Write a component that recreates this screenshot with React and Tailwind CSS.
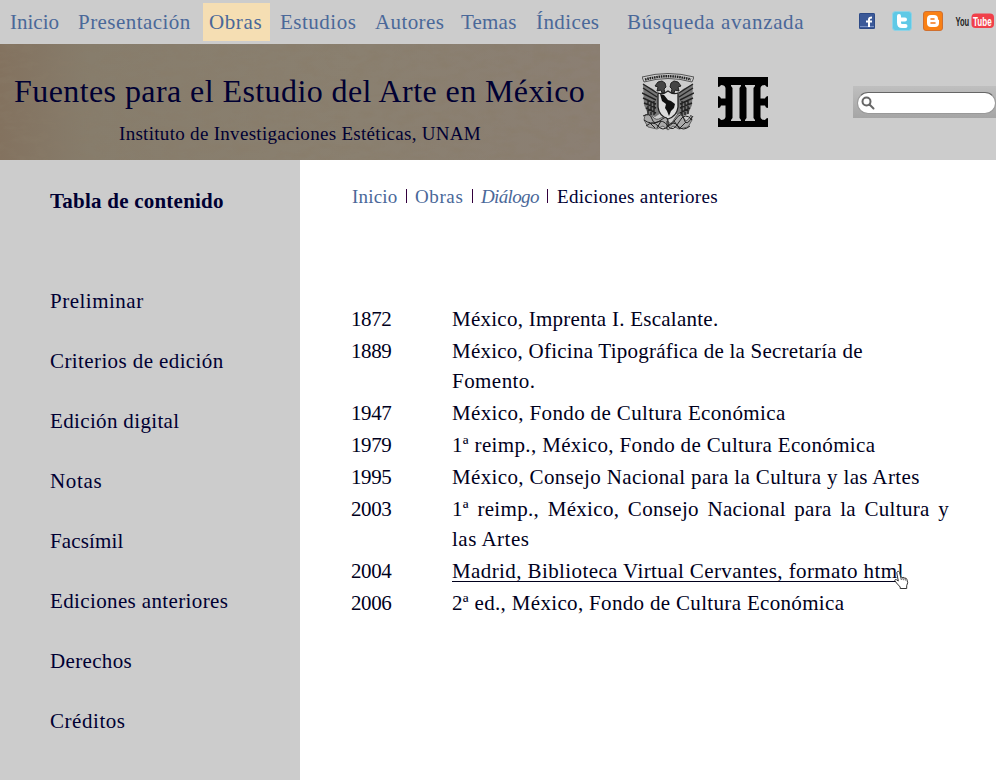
import React from 'react';

const nav = [
  ['Inicio', 'ml-[10px] w-[68px]', ''],
  ['Presentación', 'w-[125px]', 'tracking-[0.45px]'],
  ['Obras', 'w-[67px] bg-[#f5deb3] pl-[6px]', 'tracking-[0.6px]'],
  ['Estudios', 'ml-[10px] w-[95px]', 'tracking-[0.5px]'],
  ['Autores', 'w-[86px]', 'tracking-[0.4px]'],
  ['Temas', 'w-[75px]', 'tracking-[0.2px]'],
  ['Índices', 'w-[91px]', 'tracking-[0.4px]'],
  ['Búsqueda avanzada', 'w-[190px]', 'tracking-[0.65px]'],
];

const sections = [
  ['Preliminar', 'tracking-[0.5px]'],
  ['Criterios de edición', 'tracking-[0.4px]'],
  ['Edición digital', 'tracking-[0.35px]'],
  ['Notas', 'tracking-[0.7px]'],
  ['Facsímil', 'tracking-[0.15px]'],
  ['Ediciones anteriores', 'tracking-[0.37px]'],
  ['Derechos', 'tracking-[0.35px]'],
  ['Créditos', 'tracking-[0.55px]'],
];

const editions = [
  ['1872', [['México, Imprenta I. Escalante.', 'tracking-[0.25px]']]],
  ['1889', [['México, Oficina Tipográfica de la Secretaría de', 'tracking-[0.24px]'], ['Fomento.', 'tracking-[0.45px]']]],
  ['1947', [['México, Fondo de Cultura Económica', 'tracking-[0.36px]']]],
  ['1979', [['1ª reimp., México, Fondo de Cultura Económica', 'tracking-[0.35px]']]],
  ['1995', [['México, Consejo Nacional para la Cultura y las Artes', 'tracking-[0.37px]']]],
  ['2003', [['1ª reimp., México, Consejo Nacional para la Cultura y', 'w-[497px] tracking-[0.33px] [text-align-last:justify]'], ['las Artes', 'tracking-[0.5px]']]],
  ['2004', [['Madrid, Biblioteca Virtual Cervantes, formato html', 'tracking-[0.4px] underline decoration-1 underline-offset-[3px]']]],
  ['2006', [['2ª ed., México, Fondo de Cultura Económica', 'tracking-[0.33px]']]],
];

function Paper() {
  return (
    <svg className="absolute inset-0 h-full w-full" aria-hidden="true">
      <defs>
        <linearGradient id="tone">
          <stop offset="0" stopColor="#83725f" />
          <stop offset=".15" stopColor="#877d6c" />
          <stop offset=".6" stopColor="#8a8070" />
          <stop offset="1" stopColor="#8b7f73" />
        </linearGradient>
        <filter id="grain" x="0" y="0" width="100%" height="100%">
          <feTurbulence type="fractalNoise" baseFrequency=".06 .12" numOctaves="4" seed="8" />
          <feColorMatrix values="0 0 0 0 .25  0 0 0 0 .2  0 0 0 0 .14  2.4 0 0 0 -.98" />
        </filter>
      </defs>
      <rect width="100%" height="100%" fill="url(#tone)" />
      <rect width="100%" height="100%" filter="url(#grain)" opacity=".45" />
    </svg>
  );
}

function Crest() {
  return (
    <svg width="52" height="58" viewBox="0 0 52 58" fill="none" stroke="#222" strokeWidth="1">
      <path d="M0 4Q26-3 52 4L50 9Q26 2 2 9Z" strokeWidth=".7" />
      <path d="M3 6.500Q26 0 49 6.500" strokeWidth="2.400" strokeDasharray="1.600 .7" />
      <path d="M20 20l-1-3-4 1 1-4-3-1 3-4 4-1 3 2 1 4-2 2 1 4zM32 20l1-3 4 1-1-4 3-1-3-4-4-1-3 2-1 4 2 2-1 4z" fill="#444" />
      <path d="M1 11l10 5 5 5v13l3 6-6 4-7-3-4-9zM51 11l-10 5-5 5v13l-3 6 6 4 7-3 4-9z" fill="#777" stroke="none" />
      <path d="M1 11l14 9M1 15l14 9M0 20l14 7M1 25l13 6M2 30l12 5M4 35l10 5M6 28v13M9 29v13M12 28v14M51 11l-14 9M51 15l-14 9M52 20l-14 7M51 25l-13 6M50 30l-12 5M48 35l-10 5M46 28v13M43 29v13M40 28v14" strokeWidth="1.400" />
      <path d="M16 20q5 2 10-2 5 4 10 2v14q-1 9-10 12-9-3-10-12z" fill="#ddd" strokeWidth="1.300" />
      <path d="M18 21l4 1 4 5 3 1 4 3-1 4-3 3-2 5-2-5-2-3 1-4-4-3z" fill="#111" stroke="none" />
      <path d="M3 42q5-2 8 2t8 1 7 3 7-3 8-1 8-2l1 5-4 7-9 2-6-3-5 4-5-4-6 3-9-2-4-7z" fill="#aaa" strokeWidth=".6" />
      <path d="M1 43q7-4 9 3t9 1 7 2 7-2 9-1 9-3M2 47q7 5 13 2t11 4 11-4 13-2M4 53q7-6 12 0t10 0 10 0 12 0M7 49l6 6m6-7l-4 7m10-7v8m7-8l5 7m7-6l-7 7" />
    </svg>
  );
}

function InstituteLogo() {
  return (
    <svg width="50" height="50" viewBox="0 0 50 50">
      <rect width="50" height="50" fill="#000" />
      <path d="M13 8h10v1l-1.500 2v30l1.500 2v1H13v-1l1.500-2V11L13 9zM27 8h10v1l-1.500 2v30l1.500 2v1H27v-1l1.500-2V11L27 9z" fill="#ccc" />
      <path d="M0 10q2 0 3-2 4 0 4.500 3v10.500H3Q2.500 19 0 19zM0 31q2.500 0 3-2.500h4.500V40q-.5 3-4.500 3-1-2-3-2zM50 10q-2 0-3-2-4 0-4.500 3v10.500H47q.5-2.500 3-2.500zM50 31q-2.500 0-3-2.500h-4.500V40q.5 3 4.500 3 1-2 3-2z" fill="#ccc" />
    </svg>
  );
}

function Social() {
  return (
    <div className="flex h-[20px] items-center">
      <svg width="16" height="16" viewBox="0 0 16 16"><rect width="16" height="16" rx="1.500" fill="#3b5998" /><rect x=".5" y=".5" width="15" height="15" rx="1" fill="none" stroke="#2d4a86" /><path d="M1 13.500h14" stroke="#7890c4" /><path d="M10 14V6.500q0-2 3-2M7 8.500h6" stroke="#fff" strokeWidth="2" fill="none" /></svg>
      <svg className="ml-[17px]" width="20" height="20" viewBox="0 0 20 20"><rect x=".5" y=".5" width="19" height="19" rx="3" fill="#5fc9e6" stroke="#8fd3e6" /><path d="M7 5v6.500q0 3.500 3 3.500h3.500M7 8.500h6" stroke="#fff" strokeWidth="4" strokeLinecap="round" strokeLinejoin="round" fill="none" /></svg>
      <svg className="ml-[11px]" width="20" height="20" viewBox="0 0 20 20"><rect x=".5" y=".5" width="19" height="19" rx="2.500" fill="#f98014" stroke="#cf7030" /><path d="M8 4h3q4 0 4 4 0 1 1 1v3q0 4-4 4H8q-4 0-4-4V8q0-4 4-4z" fill="#fff" /><path d="M8 8h3M8 12h4" stroke="#f47614" strokeWidth="1.600" strokeLinecap="round" /></svg>
      <svg className="ml-[12px] shrink-0" width="40" height="18" viewBox="0 0 40 18"><rect x="16.500" y="1.500" width="22.500" height="14.500" rx="4" fill="#f0404a" /><text transform="translate(.5 13.500) scale(.58 1)" fill="#222" fontFamily="Liberation Sans" fontWeight="700" fontSize="13">You</text><text transform="translate(18 13.500) scale(.62 1)" fill="#fff" fontFamily="Liberation Sans" fontWeight="700" fontSize="13">Tube</text></svg>
    </div>
  );
}

function Divider({ place }) {
  return <span className={`${place} mt-[5px] h-[14px] w-px bg-[#33003d]`} />;
}

function HandCursor() {
  return (
    <svg className="absolute top-[14px] left-[442px]" width="15" height="20" viewBox="0 0 15 20">
      <path d="M3.500 1.500q1.500-1 2 1l1.300 5q1-1 2 .2 1.200-.8 2 .5 1.500-.5 2 1l.9 3.500-1 3v2.800H6.200V17L2.500 13 .8 10.500q.2-1.500 1.700-.8L4.300 11 2.800 3q-.1-1 .7-1.500z" fill="#fff" stroke="#333" strokeLinejoin="round" />
      <path d="M6.800 7.500l.6 2.500M8.900 8l.5 2.200M11 8.500l.4 2" stroke="#333" strokeWidth=".8" />
    </svg>
  );
}

export default function App() {
  return (
    <div className="flex h-[780px] w-[996px] flex-col overflow-hidden bg-white font-['Liberation_Serif',serif] text-[21px] whitespace-nowrap text-[#000033]">
      <header className="bg-[#cccccc]">
        <div className="flex h-[44px] pt-[3px]">
          <nav className="flex h-[38px] shrink-0 leading-[38px] text-[#4a6899]">
            {nav.map(([label, box, tracking]) => (
              <a key={label} className={`${box} ${tracking}`}>{label}</a>
            ))}
          </nav>
          <div className="ml-[42px] pt-[8px]"><Social /></div>
        </div>
        <div className="flex h-[116px]">
          <div className="relative w-[600px]">
            <Paper />
            <div className="relative">
              <h1 className="pt-[28px] pl-[14px] text-[32px] leading-[38px] tracking-[0.42px]">Fuentes para el Estudio del Arte en México</h1>
              <p className="pt-[12px] pl-[119px] text-[19px] leading-[24px] tracking-[0.3px]">Instituto de Investigaciones Estéticas, UNAM</p>
            </div>
          </div>
          <div className="mt-[29px] ml-[42px]"><Crest /></div>
          <div className="mt-[33px] ml-[24px]"><InstituteLogo /></div>
          <div className="mt-[42px] ml-[85px] h-[32px] w-[143px] bg-linear-to-b from-[#bfbfbf] to-[#a5a5a5] pt-[6px] pl-[4px]">
            <div className="h-[22px] w-[139px] rounded-full border border-[#999] border-t-[#666] bg-white pt-[3px] pl-[3px]">
              <svg width="14" height="14" viewBox="0 0 14 14" fill="none" stroke="#666" strokeWidth="2"><circle cx="5.500" cy="5.500" r="4" /><path d="M8.500 8.500l4 4" strokeLinecap="round" /></svg>
            </div>
          </div>
        </div>
      </header>
      <div className="flex flex-1">
        <aside className="w-[300px] bg-[#cccccc] pt-[26px] pl-[50px]">
          <h2 className="mb-[55px] leading-[30px] font-bold tracking-[0.23px]">Tabla de contenido</h2>
          {sections.map(([label, tracking]) => (
            <div key={label} className={`${tracking} h-[60px] leading-[60px]`}>{label}</div>
          ))}
        </aside>
        <main>
          <div className="mt-[24px] flex pl-[52px] text-[19px] leading-[26px]">
            <span className="w-[54px] tracking-[0.2px] text-[#4a6899]">Inicio</span>
            <Divider place="mr-[8px]" />
            <span className="w-[57px] tracking-[0.6px] text-[#4a6899]">Obras</span>
            <Divider place="mr-[8px]" />
            <span className="w-[66px] tracking-[-0.65px] text-[#4a6899] italic">Diálogo</span>
            <Divider place="mr-[9px]" />
            <span className="tracking-[0.32px]">Ediciones anteriores</span>
          </div>
          <div className="mt-[94px] ml-[51px] flex flex-col gap-[2px] leading-[30px] text-[#00001c]">
            {editions.map(([year, lines]) => (
              <div key={year} className="flex">
                <span className="w-[101px] tracking-[-0.4px]">{year}</span>
                <div className="relative">
                  {lines.map(([text, style]) => <div key={text} className={style}>{text}</div>)}
                  {year === '2004' && <HandCursor />}
                </div>
              </div>
            ))}
          </div>
        </main>
      </div>
    </div>
  );
}
